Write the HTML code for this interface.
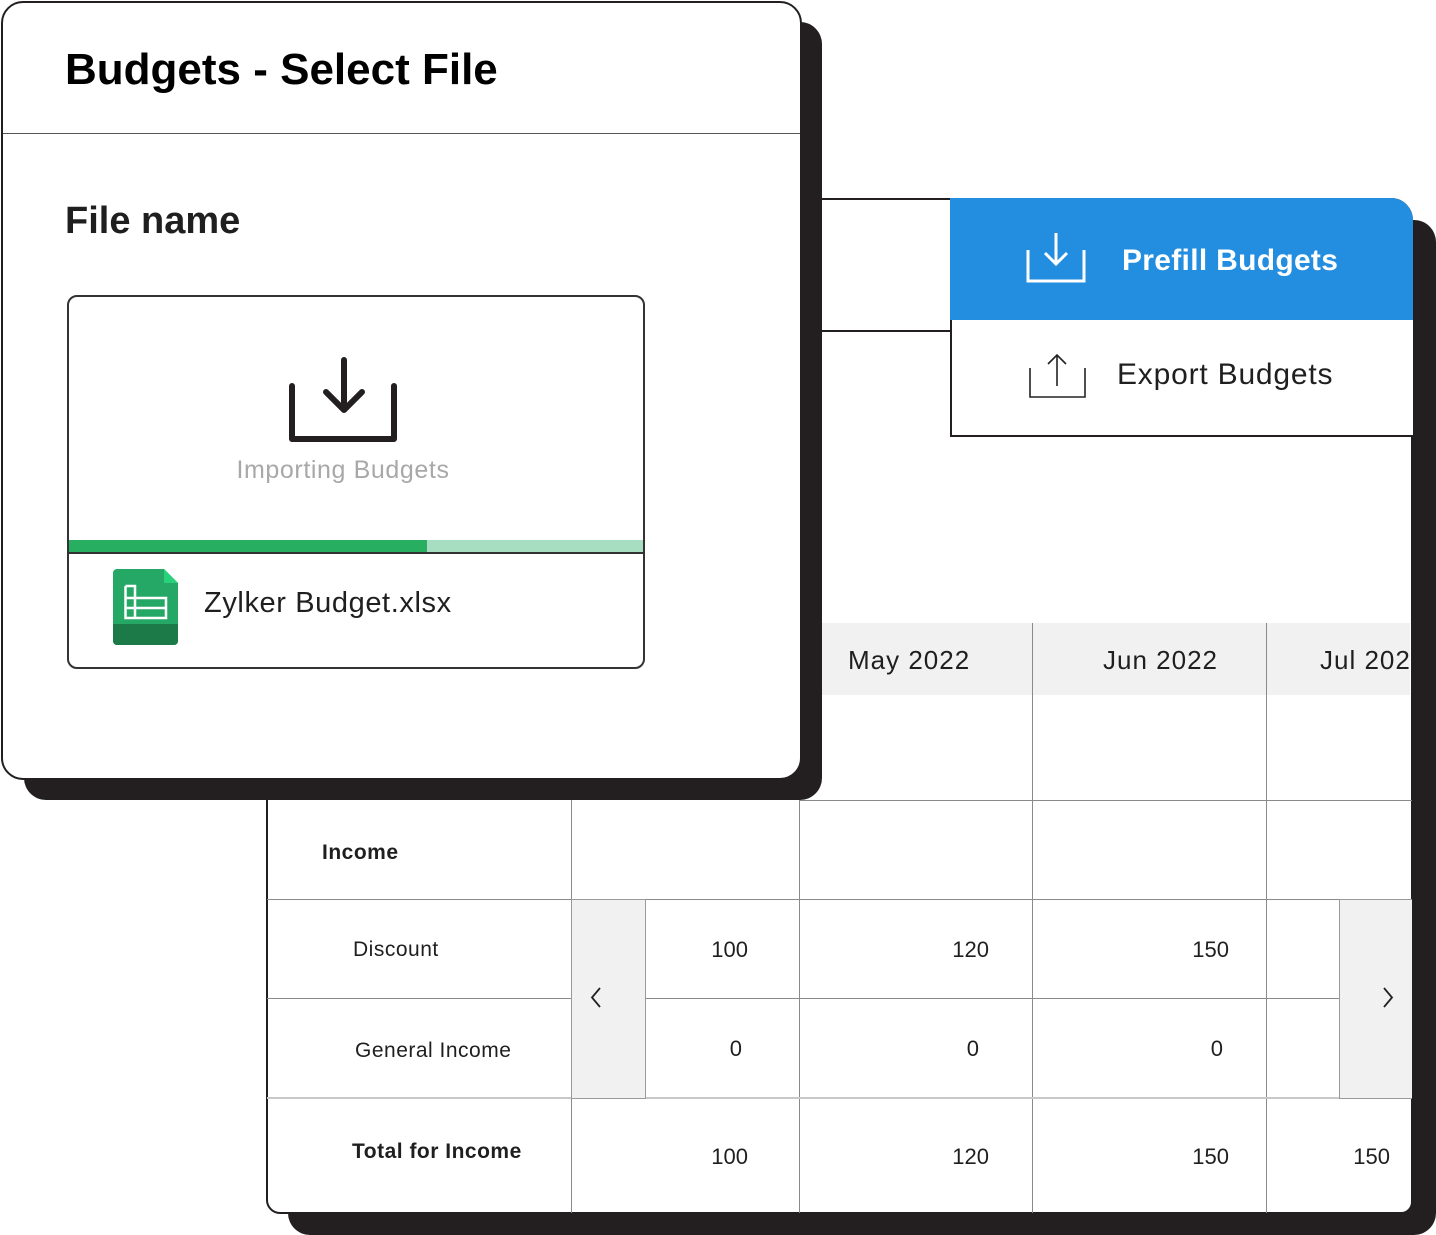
<!DOCTYPE html>
<html><head><meta charset="utf-8"><style>
*{margin:0;padding:0;box-sizing:border-box}
body{width:1436px;height:1235px;position:relative;background:#fff;font-family:"Liberation Sans",sans-serif;color:#1f1f1f;overflow:hidden}
.a{position:absolute}
.t{position:absolute;white-space:nowrap;line-height:1}
.hl{position:absolute;height:1px;background:#8a8a8a}
.vl{position:absolute;width:1px;background:#8a8a8a}
.r{letter-spacing:0.5px}
</style></head><body>
<div class="a" style="left:288px;top:220px;width:1148px;height:1015px;background:#231f20;border-radius:22px"></div>
<div class="a" style="left:266px;top:198px;width:1147px;height:1016px;background:#fff;border:2px solid #231f20;border-radius:0 22px 12px 14px;overflow:hidden"></div>
<div class="a" style="left:820px;top:623px;width:590px;height:72px;background:#f1f1f1"></div>
<div class="t" style="left:848px;top:647px;font-size:26px;letter-spacing:1px">May 2022</div>
<div class="t" style="left:1103px;top:647px;font-size:26px;letter-spacing:1px">Jun 2022</div>
<div class="a" style="left:1300px;top:623px;width:110px;height:72px;overflow:hidden"><div class="t" style="left:20px;top:24px;font-size:26px;letter-spacing:1px">Jul 2022</div></div>
<div class="vl" style="left:1032px;top:623px;height:590px"></div>
<div class="vl" style="left:1266px;top:623px;height:590px"></div>
<div class="vl" style="left:799px;top:800px;height:413px"></div>
<div class="vl" style="left:571px;top:800px;height:413px"></div>
<div class="hl" style="left:800px;top:800px;width:612px"></div>
<div class="hl" style="left:267px;top:899px;width:1145px"></div>
<div class="hl" style="left:267px;top:998px;width:1145px"></div>
<div class="hl" style="left:267px;top:1097px;width:1145px;height:2px;background:#c8c8c8"></div>
<div class="a" style="left:571px;top:899px;width:75px;height:200px;background:#f1f1f1;border:1px solid #9a9a9a"></div>
<svg class="a" style="left:588px;top:986px" width="16" height="24"><path d="M12 2 L4 11.5 L12 21" fill="none" stroke="#222" stroke-width="1.8"/></svg>
<div class="a" style="left:1339px;top:899px;width:73px;height:200px;background:#f1f1f1;border:1px solid #9a9a9a;border-right:none"></div>
<svg class="a" style="left:1380px;top:986px" width="16" height="24"><path d="M4 2 L12 11.5 L4 21" fill="none" stroke="#222" stroke-width="1.8"/></svg>
<div class="t r" style="left:322px;top:842px;font-size:21px;font-weight:bold">Income</div>
<div class="t r" style="left:353px;top:939px;font-size:21px">Discount</div>
<div class="t r" style="left:355px;top:1040px;font-size:21px">General Income</div>
<div class="t r" style="left:352px;top:1141px;font-size:21px;font-weight:bold">Total for Income</div>
<div class="t" style="left:648px;width:100px;text-align:right;top:939px;font-size:22px">100</div>
<div class="t" style="left:889px;width:100px;text-align:right;top:939px;font-size:22px">120</div>
<div class="t" style="left:1129px;width:100px;text-align:right;top:939px;font-size:22px">150</div>
<div class="t" style="left:642px;width:100px;text-align:right;top:1038px;font-size:22px">0</div>
<div class="t" style="left:879px;width:100px;text-align:right;top:1038px;font-size:22px">0</div>
<div class="t" style="left:1123px;width:100px;text-align:right;top:1038px;font-size:22px">0</div>
<div class="t" style="left:648px;width:100px;text-align:right;top:1146px;font-size:22px">100</div>
<div class="t" style="left:889px;width:100px;text-align:right;top:1146px;font-size:22px">120</div>
<div class="t" style="left:1129px;width:100px;text-align:right;top:1146px;font-size:22px">150</div>
<div class="t" style="left:1290px;width:100px;text-align:right;top:1146px;font-size:22px">150</div>
<div class="a" style="left:822px;top:330px;width:130px;height:2px;background:#231f20"></div>
<div class="a" style="left:950px;top:198px;width:463px;height:123px;background:#238ddf;border-radius:0 22px 0 0"></div>
<svg class="a" style="left:1024px;top:230px" width="68" height="56"><path d="M4 20 V51 H60 V20" fill="none" stroke="#fff" stroke-width="3"/><path d="M32 3 V34 M21 23 L32 34 L43 23" fill="none" stroke="#fff" stroke-width="3"/></svg>
<div class="t" style="left:1122px;top:246px;font-size:30px;color:#fff;font-weight:bold;letter-spacing:0.3px">Prefill Budgets</div>
<div class="a" style="left:950px;top:320px;width:463px;height:117px;background:#fff;border-left:2px solid #231f20;border-bottom:2px solid #231f20"></div>
<svg class="a" style="left:1026px;top:352px" width="64" height="50"><path d="M4 16 V45 H59 V16" fill="none" stroke="#222" stroke-width="1.6"/><path d="M31 3 V34 M22 12 L31 3 L40 12" fill="none" stroke="#222" stroke-width="1.6"/></svg>
<div class="t" style="left:1117px;top:360px;font-size:30px;letter-spacing:0.8px">Export Budgets</div>
<div class="a" style="left:24px;top:22px;width:798px;height:778px;background:#231f20;border-radius:22px"></div>
<div class="a" style="left:1px;top:1px;width:801px;height:779px;background:#fff;border:2px solid #231f20;border-radius:22px"></div>
<div class="t" style="left:65px;top:48px;font-size:44px;font-weight:bold;color:#000">Budgets - Select File</div>
<div class="a" style="left:3px;top:133px;width:797px;height:1px;background:#555"></div>
<div class="t" style="left:65px;top:202px;font-size:38px;font-weight:bold">File name</div>
<div class="a" style="left:67px;top:295px;width:578px;height:374px;border:2px solid #333;border-radius:10px;overflow:hidden">
  <div class="a" style="left:0;top:243px;width:360px;height:12px;background:#27ae60"></div>
  <div class="a" style="left:358px;top:243px;width:220px;height:12px;background:#a7dec2"></div>
  <div class="a" style="left:0;top:255px;width:578px;height:2px;background:#333"></div>
</div>
<svg class="a" style="left:286px;top:354px" width="116" height="92"><path d="M6 32 V85 H108 V32" fill="none" stroke="#231f20" stroke-width="6" stroke-linecap="round" stroke-linejoin="round"/><path d="M58 6 V56 M40 38 L58 56 L76 38" fill="none" stroke="#231f20" stroke-width="6" stroke-linecap="round" stroke-linejoin="round"/></svg>
<div class="t" style="left:67px;width:552px;text-align:center;top:458px;font-size:25px;color:#a8a8a8;letter-spacing:0.6px">Importing Budgets</div>
<svg class="a" style="left:113px;top:569px" width="66" height="76"><path d="M4 0 H51 L65 14 V72 a4 4 0 0 1 -4 4 H4 a4 4 0 0 1 -4 -4 V4 a4 4 0 0 1 4 -4Z" fill="#25a865"/><path d="M51 0 L65 14 H51Z" fill="#29d17a"/><path d="M0 55 H65 V72 a4 4 0 0 1 -4 4 H4 a4 4 0 0 1 -4 -4Z" fill="#1c7a49"/><path d="M12.5 17 V49 H53 V29 H12.5 M12.5 17 H22 V49 M12.5 39 H53" fill="none" stroke="#fff" stroke-width="2.5"/></svg>
<div class="t" style="left:204px;top:589px;font-size:29px;letter-spacing:0.6px">Zylker Budget.xlsx</div>
</body></html>
